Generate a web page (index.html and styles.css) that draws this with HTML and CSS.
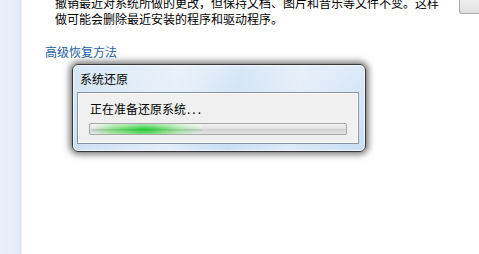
FILE: index.html
```html
<!DOCTYPE html>
<html lang="zh-CN">
<head>
<meta charset="utf-8">
<link rel="stylesheet" href="styles.css">
</head>
<body>
<div class="page">
  <aside class="sidebar"></aside>
  <main class="content">
    <div class="top-row">
      <p class="desc">撤销最近对系统所做的更改，但保持文档、图片和音乐等文件不变。这样<br>做可能会删除最近安装的程序和驱动程序。</p>
      <div class="side-btn"></div>
    </div>
    <a class="link" href="#">高级恢复方法</a>
  </main>
  <div class="dialog">
    <div class="dialog-title">系统还原</div>
    <div class="dialog-panel">
      <div class="status">正在准备还原系统<span class="dots">...</span></div>
      <div class="progress"><div class="glow"></div></div>
    </div>
  </div>
</div>
</body>
</html>
```
FILE: styles.css
```css
* { box-sizing: border-box; }
html, body {
  margin: 0;
  padding: 0;
  width: 479px;
  height: 254px;
  overflow: hidden;
  background: #ffffff;
  font-family: "Noto Sans CJK SC", "Noto Sans", sans-serif;
  font-size: 12px;
  color: #000;
}
.page {
  position: relative;
  display: flex;
  width: 479px;
  height: 254px;
}
.sidebar {
  width: 22px;
  flex: none;
  background: linear-gradient(to right, #e9f0fa 0, #e4ecf8 18px, #dbe5f3 21px, #f4f7fc 22px);
}
.content {
  flex: 1;
  padding-left: 23px;
}
.top-row {
  display: flex;
  justify-content: space-between;
}
.desc {
  margin: -5px 0 0 10px;
  line-height: 16px;
  white-space: nowrap;
  color: #000;
}
.side-btn {
  width: 20px;
  height: 22px;
  margin-top: -8px;
  border: 1px solid #a9a9a9;
  border-right: none;
  border-radius: 0 0 0 3px;
  background: linear-gradient(#f6f6f6, #e0e0e0);
}
.link {
  display: block;
  margin-top: 17px;
  line-height: 16px;
  color: #1d5fa8;
  text-decoration: none;
}
.dialog {
  position: absolute;
  left: 72px;
  top: 64px;
  width: 294px;
  height: 88px;
  border: 1px solid #33383f;
  border-radius: 6px;
  padding: 6px 6px 7px 4px;
  background:
    linear-gradient(100deg, rgba(255,255,255,0) 0%, rgba(255,255,255,0.45) 35%, rgba(255,255,255,0) 55%, rgba(255,255,255,0.35) 75%, rgba(255,255,255,0) 100%),
    linear-gradient(#d9e8f7, #c9def3);
  box-shadow: inset 0 0 0 1px rgba(255,255,255,0.7), 0 0 7px 2px rgba(0,0,0,0.6);
}
.dialog-title {
  padding-left: 3px;
  line-height: 16px;
  height: 16px;
  margin-bottom: 5px;
  color: #000;
}
.dialog-panel {
  border: 1px solid #8996a8;
  background: #f0f0f0;
  padding: 8px 11px;
  box-shadow: inset 0 0 0 1px #fbfbfb;
}
.status {
  padding-left: 1px;
  line-height: 16px;
  height: 16px;
  color: #000;
}
.dots {
  letter-spacing: 2px;
  margin-left: 1px;
}
.progress {
  position: relative;
  margin-top: 6px;
  height: 12px;
  border: 1px solid #a8a8a8;
  border-radius: 2px;
  background: linear-gradient(#f3f3f3 0%, #e2e2e2 45%, #d3d3d3 55%, #e4e4e4 100%);
  overflow: hidden;
}
.glow {
  position: absolute;
  left: 2px;
  top: 0;
  bottom: 0;
  width: 110px;
  background:
    linear-gradient(to right, rgba(110,225,110,0) 0%, rgba(90,220,90,0.75) 22%, #2fcc3a 45%, #3ed046 55%, rgba(120,225,120,0.6) 78%, rgba(200,235,200,0) 100%);
}
.glow::after {
  content: "";
  position: absolute;
  inset: 0;
  background: linear-gradient(rgba(255,255,255,0.55), rgba(255,255,255,0.1) 45%, rgba(0,80,0,0.08) 55%, rgba(255,255,255,0.35));
}
```
